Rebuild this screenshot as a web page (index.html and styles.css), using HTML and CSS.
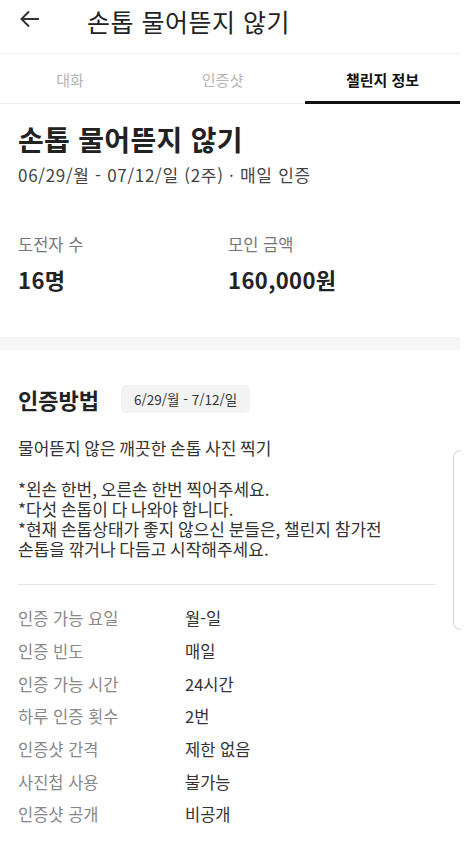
FILE: index.html
```html
<!DOCTYPE html>
<html lang="ko">
<head>
<meta charset="utf-8">
<link rel="stylesheet" href="styles.css">
</head>
<body>
<div class="page">
  <header class="appbar">
    <svg class="back" width="24" height="24" viewBox="0 0 24 24"><path d="M21 12H4M11 4.5L3.5 12 11 19.5" fill="none" stroke="#333" stroke-width="2"/></svg>
    <h1 class="appbar-title">손톱 물어뜯지 않기</h1>
  </header>
  <nav class="tabs">
    <div class="tab">대화</div>
    <div class="tab">인증샷</div>
    <div class="tab active">챌린지 정보</div>
  </nav>

  <section class="summary">
    <h2 class="ch-title">손톱 물어뜯지 않기</h2>
    <p class="period">06/29/월 - 07/12/일 (2주) · 매일 인증</p>
    <div class="stats">
      <div class="stat">
        <div class="stat-label">도전자 수</div>
        <div class="stat-value">16명</div>
      </div>
      <div class="stat">
        <div class="stat-label">모인 금액</div>
        <div class="stat-value">160,000원</div>
      </div>
    </div>
  </section>

  <div class="band"></div>

  <section class="method">
    <div class="method-head">
      <h3 class="method-title">인증방법</h3>
      <span class="badge">6/29/월 - 7/12/일</span>
    </div>
    <p class="desc">물어뜯지 않은 깨끗한 손톱 사진 찍기<br><br>*왼손 한번, 오른손 한번 찍어주세요.<br>*다섯 손톱이 다 나와야 합니다.<br>*현재 손톱상태가 좋지 않으신 분들은, 챌린지 참가전<br>손톱을 깎거나 다듬고 시작해주세요.</p>
    <hr class="divider">
    <dl class="rules">
      <div class="rule"><dt>인증 가능 요일</dt><dd>월-일</dd></div>
      <div class="rule"><dt>인증 빈도</dt><dd>매일</dd></div>
      <div class="rule"><dt>인증 가능 시간</dt><dd>24시간</dd></div>
      <div class="rule"><dt>하루 인증 횟수</dt><dd>2번</dd></div>
      <div class="rule"><dt>인증샷 간격</dt><dd>제한 없음</dd></div>
      <div class="rule"><dt>사진첩 사용</dt><dd>불가능</dd></div>
      <div class="rule"><dt>인증샷 공개</dt><dd>비공개</dd></div>
    </dl>
  </section>
</div>
<div class="edge-handle"></div>
</body>
</html>
```

FILE: styles.css
```css
html, body {
  margin: 0;
  padding: 0;
  background: #fff;
}
body {
  font-family: "Noto Sans CJK KR", "Noto Sans", sans-serif;
  color: #333;
  overflow: hidden;
  height: 841px;
  position: relative;
}
.page {
  width: 460px;
}
.appbar {
  height: 53px;
  display: flex;
  align-items: flex-start;
  padding-top: 4px;
  box-sizing: border-box;
}
.back {
  margin: 3px 0 0 18px;
  flex: none;
}
.appbar-title {
  margin: 0 0 0 45px;
  font-size: 25px;
  font-weight: 400;
  line-height: 34px;
  color: #222;
  letter-spacing: 0.5px;
}
.tabs {
  display: grid;
  grid-template-columns: 140px 1fr 155px;
  height: 51px;
  border-top: 1px solid #f2f2f2;
  border-bottom: 1px solid #ececec;
  box-sizing: border-box;
}
.tab {
  display: flex;
  align-items: center;
  justify-content: center;
  font-size: 15px;
  color: #b4b4b4;
  padding-top: 1px;
}
.tab.active {
  color: #111;
  font-weight: 700;
  border-bottom: 3px solid #111;
  margin-bottom: -1px;
  padding-top: 4px;
}
.summary {
  padding: 17px 18px 0;
  height: 233px;
  box-sizing: border-box;
}
.ch-title {
  margin: 0;
  font-size: 28px;
  font-weight: 700;
  line-height: 36px;
  color: #222;
  letter-spacing: 0.3px;
}
.period {
  margin: 1px 0 0;
  font-size: 17px;
  line-height: 34px;
  color: #444;
  letter-spacing: 0.7px;
}
.stats {
  display: grid;
  grid-template-columns: 210px 1fr;
  margin-top: 40px;
}
.stat-label {
  font-size: 16.5px;
  line-height: 24px;
  color: #777;
}
.stat-value {
  margin-top: 10px;
  font-size: 22px;
  font-weight: 700;
  line-height: 26px;
  color: #222;
  letter-spacing: 0.4px;
}
.band {
  height: 13px;
  background: #f6f6f6;
}
.method {
  padding: 35px 18px 0;
}
.method-head {
  display: flex;
  align-items: center;
  gap: 22px;
}
.method-title {
  margin: 0;
  font-size: 22px;
  font-weight: 700;
  line-height: 28px;
  color: #222;
}
.badge {
  background: #f3f3f3;
  border-radius: 5px;
  padding: 0 13px;
  font-size: 13.5px;
  line-height: 28px;
  color: #333;
}
.desc {
  margin: 25px 0 0;
  font-size: 17px;
  line-height: 20.3px;
  word-spacing: -1px;
  color: #333;
}
.divider {
  margin: 24px 6px 0 0;
  border: 0;
  border-top: 1px solid #e6e6e6;
}
.rules {
  margin: 17px 0 0;
  display: flex;
  flex-direction: column;
}
.rule {
  display: flex;
  height: 32.7px;
  align-items: center;
}
.rule dt {
  width: 167px;
  font-size: 16.5px;
  color: #888;
}
.rule dd {
  margin: 0;
  font-size: 16.5px;
  color: #333;
}
.edge-handle {
  position: absolute;
  left: 453px;
  top: 450px;
  width: 8px;
  height: 180px;
  border-left: 1.5px solid #d2d2d2;
  border-top: 1px solid #d8d8d8;
  border-bottom: 1px solid #d8d8d8;
  border-radius: 8px 0 0 8px;
  box-sizing: border-box;
}
```
